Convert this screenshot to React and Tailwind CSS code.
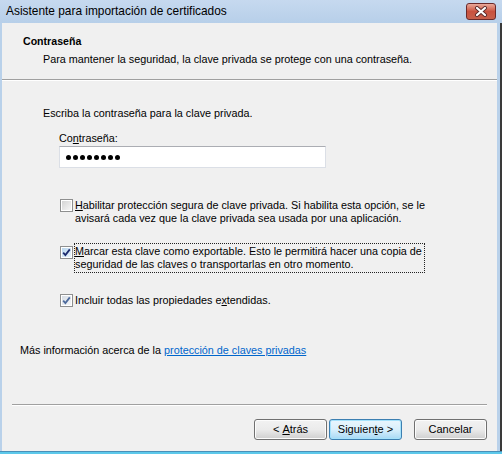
import React from "react";

const font = { fontFamily: '"Liberation Sans", Arial, sans-serif' };

const Check = ({ checked, dim }) => (
  <div className="w-[13px] h-[13px] shrink-0 border border-[#8e8f8f] bg-white p-[1px]">
    <div
      className={
        "w-full h-full flex items-center justify-center " +
        (checked
          ? dim
            ? "bg-gradient-to-br from-[#d6dce4] to-[#f4f6f8]"
            : "bg-gradient-to-br from-[#b9d6ee] to-[#eaf4fc]"
          : "bg-gradient-to-br from-[#d4d4d4] to-[#f6f6f6]")
      }
    >
      {checked && (
        <svg width="9" height="9" viewBox="0 0 9 9">
          <path
            d="M1.2 4.6 L3.4 7 L7.8 1.4"
            fill="none"
            stroke={dim ? "#4d6a9c" : "#1b2a6e"}
            strokeWidth="1.8"
          />
        </svg>
      )}
    </div>
  </div>
);

const Button = ({ children, primary, width }) => (
  <div
    className={
      "h-[21px] rounded-[3px] border flex items-center justify-center text-[11px] text-black whitespace-pre " +
      width +
      " " +
      (primary
        ? "border-[#3c7fb1] bg-gradient-to-b from-[#eaf6fd] via-[#d9f0fc] to-[#a7d9f5] shadow-[inset_0_0_0_1px_#a5e2fb]"
        : "border-[#707070] bg-gradient-to-b from-[#f2f2f2] via-[#ebebeb] to-[#cfcfcf] shadow-[inset_0_0_0_1px_#fcfcfc]")
    }
  >
    {children}
  </div>
);

export default function App() {
  return (
    <div className="w-[502px] h-[454px] flex flex-col bg-[#b9d1ea]" style={font}>
      {/* title bar */}
      <div className="h-[23px] flex items-center bg-gradient-to-b from-[#c6d9ef] to-[#b7cfe9]">
        <span className="ml-[6px] text-[11.9px] text-black leading-[15px]">
          Asistente para importación de certificados
        </span>
        <div className="ml-auto mr-[6px] mt-[-1px] w-[30px] h-[17px] rounded-[3px] border border-[#6b2a2a] bg-gradient-to-b from-[#e9a99b] via-[#c9523f] to-[#c7604b] flex items-center justify-center">
          <svg width="14" height="11" viewBox="0 0 14 11">
            <path d="M3 2 L11 9 M11 2 L3 9" stroke="#5a2a2a" strokeWidth="4" strokeLinecap="round" />
            <path d="M3 2 L11 9 M11 2 L3 9" stroke="#ffffff" strokeWidth="2.2" strokeLinecap="round" />
          </svg>
        </div>
      </div>

      <div className="flex-1 flex min-h-0">
        <div className="w-[2px]" />
        <div className="flex-1 flex flex-col bg-[#f0f0f0] text-[10.8px] text-black">
          {/* header */}
          <div className="h-[57px] pt-[11px] pl-[21px] border-b border-[#a0a0a0]">
            <div className="font-bold leading-[15px] text-[10.6px]">Contraseña</div>
            <div className="ml-[20px] mt-[3px] leading-[15px]">
              Para mantener la seguridad, la clave privada se protege con una contraseña.
            </div>
          </div>
          <div className="h-[1px] bg-white" />

          {/* body */}
          <div className="flex-1 flex flex-col pl-[41px]">
            <div className="mt-[25px] leading-[15px]">Escriba la contraseña para la clave privada.</div>
            <div className="ml-[16px] mt-[10px] leading-[15px]">
              Co<u>n</u>traseña:
            </div>
            <div className="ml-[16px] mt-[0px] w-[267px] h-[22px] bg-white border border-[#dbdfe6] border-t-[#abadb3] flex items-center pl-[6px] gap-[2px]">
              {[0, 1, 2, 3, 4, 5, 6, 7].map((i) => (
                <span key={i} className="w-[5px] h-[5px] rounded-full bg-black" />
              ))}
            </div>

            <div className="ml-[17px] mt-[30px] flex items-start gap-[1px] leading-[13px]">
              <div className="mt-[1px]">
                <Check />
              </div>
              <div className="pl-[1px] pt-[1px]">
                <u>H</u>abilitar protección segura de clave privada. Si habilita esta opción, se le
                <br />
                avisará cada vez que la clave privada sea usada por una aplicación.
              </div>
            </div>

            <div className="ml-[17px] mt-[18px] flex items-start gap-[1px] leading-[13px]">
              <div className="mt-[3px]">
                <Check checked />
              </div>
              <div className="border border-dotted border-[#222] pb-[1px] pt-[1px] pr-[2px]">
                <u>M</u>arcar esta clave como exportable. Esto le permitirá hacer una copia de
                <br />
                seguridad de las claves o transportarlas en otro momento.
              </div>
            </div>

            <div className="ml-[17px] mt-[20px] flex items-start gap-[1px] leading-[13px]">
              <div className="mt-[1px]">
                <Check checked dim />
              </div>
              <div className="pl-[1px] pt-[1px]">
                Incluir todas las propiedades e<u>x</u>tendidas.
              </div>
            </div>

            <div className="ml-[-23px] mt-[36px] leading-[15px]">
              Más información acerca de la{" "}
              <span className="text-[#0066cc] underline">protección de claves privadas</span>
            </div>
          </div>

          {/* footer */}
          <div className="ml-[10px] w-[475px] h-[1px] bg-[#a0a0a0]" />
          <div className="ml-[10px] w-[475px] h-[1px] bg-white" />
          <div className="flex justify-end pr-[10px] mt-[13px] mb-[11px]">
            <Button width="w-[73px]">
              {"< "}
              <u>A</u>
              {"trás"}
            </Button>
            <div className="w-[2px]" />
            <Button primary width="w-[73px]">
              {"Siguien"}
              <u>t</u>
              {"e >"}
            </Button>
            <div className="w-[12px]" />
            <Button width="w-[73px]">Cancelar</Button>
          </div>
        </div>
        <div className="w-[3px] bg-[#b9d1ea]" />
        <div className="w-[2px] bg-[#3a3a3a]" />
      </div>
      <div className="h-[1px] bg-[#4a8fb8]" />
      <div className="h-[2px] bg-[#5cc8ea]" />
    </div>
  );
}
